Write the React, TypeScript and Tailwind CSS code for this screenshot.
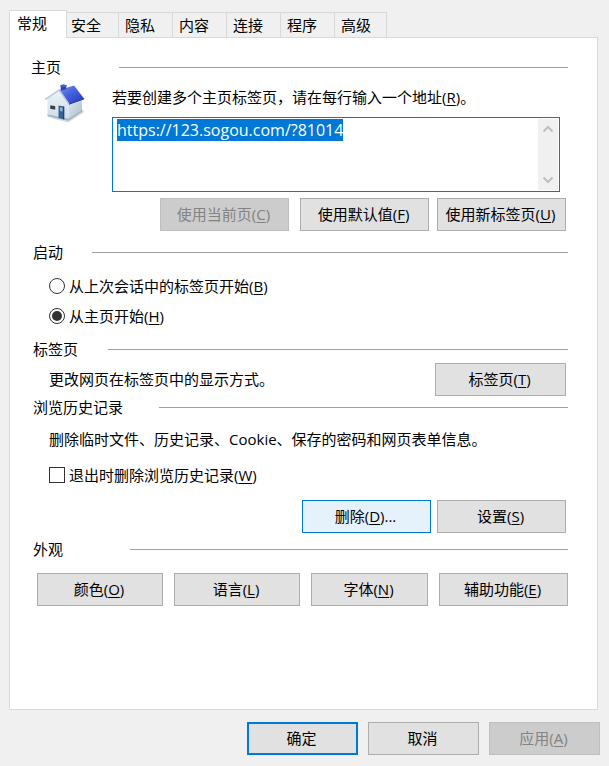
import { useEffect, useRef, type ReactNode } from "react";
import clsx from "clsx";

const tabs = ["常规", "安全", "隐私", "内容", "连接", "程序", "高级"];

// Label text followed by its access key, e.g. 颜色(O)
function Keyed({ text, k, after }: { text: string; k: string; after?: string }) {
  return (
    <span>
      {text}(<span className="underline underline-offset-2">{k}</span>){after}
    </span>
  );
}

type ButtonProps = {
  children: ReactNode;
  variant?: "normal" | "hover" | "default";
  disabled?: boolean;
  className?: string;
};

function Button({ children, variant = "normal", disabled, className }: ButtonProps) {
  return (
    <button
      type="button"
      disabled={disabled}
      className={clsx(
        "flex h-[33px] items-center justify-center pr-[2px] pb-[2px] whitespace-nowrap",
        disabled && "border border-[#bfbfbf] bg-[#cccccc] text-[#838383]",
        !disabled && variant === "normal" && "border border-[#adadad] bg-[#e1e1e1]",
        !disabled && variant === "hover" && "border border-[#0078d7] bg-[#e5f1fb]",
        !disabled && variant === "default" && "border-2 border-[#0078d7] bg-[#e1e1e1]",
        className
      )}
    >
      {children}
    </button>
  );
}

function Heading({ title, className }: { title: string; className: string }) {
  return (
    <div className={clsx("flex items-center", className)}>
      <h2>{title}</h2>
      <div className="h-px flex-1 bg-[#a0a0a0]" />
    </div>
  );
}

function HouseIcon() {
  return (
    <svg width="42" height="42" viewBox="0 0 42 42" aria-hidden="true">
      <defs>
        <linearGradient id="roof" x1="0" y1="0" x2="1" y2="1">
          <stop offset="0" stopColor="#7d94ee" />
          <stop offset="0.45" stopColor="#4460de" />
          <stop offset="1" stopColor="#2535bb" />
        </linearGradient>
        <linearGradient id="front" x1="0" y1="0" x2="0" y2="1">
          <stop offset="0" stopColor="#eef3f8" />
          <stop offset="1" stopColor="#cbdbe7" />
        </linearGradient>
        <linearGradient id="side" x1="0" y1="0" x2="1" y2="1">
          <stop offset="0" stopColor="#dbe6ee" />
          <stop offset="1" stopColor="#a9becd" />
        </linearGradient>
      </defs>
      <path d="M4 35 25 40.5 41.5 30 39 27 25 37Z" fill="#8b989f" opacity="0.35" />
      <path d="M4.5 17 16 8.5 25.5 22V38.5L4.5 34Z" fill="url(#front)" />
      <path d="M25.5 21.5 39 17.5V29.5L25.5 38.5Z" fill="url(#side)" />
      <path d="M4.5 32.5 25.5 36.8 39 28V29.7L25.5 38.7 4.5 34.3Z" fill="#a3b5c2" />
      <path d="M16 8 31 3.5 41.2 16.8 26 22.2Z" fill="url(#roof)" />
      <path d="M17.8 4V8.6L23.2 7V4Z" fill="#2c42a4" />
      <path d="M17.2 3.2 20.5 2.3 23.8 3.2V4.4L20.5 5.2 17.2 4.4Z" fill="#4a63c4" />
      <path d="M2.3 17.5 16 8 26 22.2" fill="none" stroke="#bccbdc" strokeWidth="1.6" />
      <path d="M26 22.2 41.2 16.8" stroke="#2333a0" strokeWidth="1" />
      <path d="M6.5 22.5 13 23.4V28.6L6.5 27.5Z" fill="#f4f8fb" />
      <path d="M7.2 23.2 12.3 24V27.8L7.2 26.9Z" fill="#39424d" />
      <path d="M15.5 23.6 21.2 24.6V37.4L15.5 36.1Z" fill="#386494" />
      <path d="M17 25.2 19.6 25.7V29.4L17 28.9Z" fill="#8db4d4" />
      <path d="M20.7 24.6V37.3" stroke="#193e6c" strokeWidth="1" />
    </svg>
  );
}

function ScrollArrow({ down }: { down?: boolean }) {
  return (
    <button type="button" aria-label={down ? "向下滚动" : "向上滚动"} className="flex h-5 items-center justify-center">
      <svg width="10" height="8" viewBox="0 0 10 8" fill="none" stroke="#bfbfbf" strokeWidth="2">
        <path d={down ? "M.5 1.5 5 6 9.5 1.5" : "M.5 6.5 5 2 9.5 6.5"} />
      </svg>
    </button>
  );
}

export default function App() {
  const address = useRef<HTMLTextAreaElement>(null);

  useEffect(() => {
    address.current?.focus();
    address.current?.select();
  }, []);

  return (
    <main className="flex min-h-screen flex-col bg-[#f0f0f0] px-[9px] pt-[10px] pb-[11px] font-['Open_Sans','Noto_Sans_CJK_SC',sans-serif] text-[15px] leading-5 text-black">
      {/* Tabs */}
      <div role="tablist" className="relative z-10 -mb-px flex items-end">
        {tabs.map((tab, i) => (
          <button
            key={tab}
            type="button"
            role="tab"
            aria-selected={i === 0}
            className={clsx(
              "border-[#d9d9d9] text-left",
              i === 0 && "h-7 w-[58px] border-x border-t bg-white pb-[3px] pl-[7px]",
              i === 1 && "h-[26px] w-[52px] border-y border-r pl-1",
              i > 1 && i < 6 && "h-[26px] w-[54px] border-y border-r pl-[6px]",
              i === 6 && "h-[26px] w-[52px] border-y border-r pl-[6px]"
            )}
          >
            {tab}
          </button>
        ))}
      </div>

      <div role="tabpanel" className="mr-[2px] flex-1 border border-[#d9d9d9] bg-white pt-[19px] pr-[29px] pl-[23px]">
        <section>
          <Heading title="主页" className="-ml-[2px] gap-[58px]" />
          <div className="mt-[5px] flex">
            <div className="w-[79px] shrink-0 pl-[10px]">
              <HouseIcon />
            </div>
            <div className="flex-1 pt-[5px] pr-2">
              <label htmlFor="address">
                <Keyed text="若要创建多个主页标签页，请在每行输入一个地址" k="R" after="。" />
              </label>
              <div className="mt-[10px] flex h-[75px] border border-[#0078d7] p-px">
                <textarea
                  id="address"
                  ref={address}
                  spellCheck={false}
                  defaultValue="https://123.sogou.com/?81014"
                  className="flex-1 resize-none overflow-hidden px-[3px] py-px text-[16px] outline-none selection:bg-[#0078d7] selection:text-white"
                />
                <div className="flex w-5 flex-col justify-between bg-[#f0f0f0]">
                  <ScrollArrow />
                  <ScrollArrow down />
                </div>
              </div>
            </div>
          </div>
          <div className="mt-[6px] flex justify-end gap-2 pr-[2px]">
            <Button disabled className="mr-[3px] w-[129px]">
              <Keyed text="使用当前页" k="C" />
            </Button>
            <Button className="w-[129px]">
              <Keyed text="使用默认值" k="F" />
            </Button>
            <Button className="w-[129px]">
              <Keyed text="使用新标签页" k="U" />
            </Button>
          </div>
        </section>

        <section className="mt-[11px]">
          <Heading title="启动" className="gap-[29px]" />
          <div className="mt-[14px] flex flex-col items-start gap-[10px] pl-4">
            <label className="flex items-center gap-1">
              <input
                type="radio"
                name="startup"
                className="size-4 appearance-none rounded-full border border-[#333333] bg-white p-[2px] bg-clip-content checked:bg-[#333333]"
              />
              <Keyed text="从上次会话中的标签页开始" k="B" />
            </label>
            <label className="flex items-center gap-1">
              <input
                type="radio"
                name="startup"
                defaultChecked
                className="size-4 appearance-none rounded-full border border-[#333333] bg-white p-[2px] bg-clip-content checked:bg-[#333333]"
              />
              <Keyed text="从主页开始" k="H" />
            </label>
          </div>
        </section>

        <section className="mt-[13px]">
          <Heading title="标签页" className="gap-[30px]" />
          <div className="mt-1 flex items-center justify-between pr-[2px] pl-4">
            <p className="pb-[2px]">更改网页在标签页中的显示方式。</p>
            <Button className="w-[131px]">
              <Keyed text="标签页" k="T" />
            </Button>
          </div>
        </section>

        <section className="mt-px">
          <Heading title="浏览历史记录" className="gap-9" />
          <p className="mt-3 pl-4">删除临时文件、历史记录、Cookie、保存的密码和网页表单信息。</p>
          <div className="mt-4 flex pl-4">
            <label className="flex items-center gap-1">
              <input type="checkbox" className="size-4 appearance-none border border-[#333333] bg-white" />
              <Keyed text="退出时删除浏览历史记录" k="W" />
            </label>
          </div>
          <div className="mt-[15px] flex justify-end gap-[6px] pr-[2px]">
            <Button variant="hover" className="w-[129px]">
              <Keyed text="删除" k="D" after="..." />
            </Button>
            <Button className="w-[129px]">
              <Keyed text="设置" k="S" />
            </Button>
          </div>
        </section>

        <section className="mt-[6px]">
          <Heading title="外观" className="gap-[67px]" />
          <div className="mt-[14px] grid grid-cols-[126fr_126fr_117fr_129fr] gap-[11px] pl-1">
            <Button>
              <Keyed text="颜色" k="O" />
            </Button>
            <Button>
              <Keyed text="语言" k="L" />
            </Button>
            <Button>
              <Keyed text="字体" k="N" />
            </Button>
            <Button>
              <Keyed text="辅助功能" k="E" />
            </Button>
          </div>
        </section>
      </div>

      <div className="mt-3 flex justify-end gap-[10px]">
        <Button variant="default" className="w-[111px]">
          确定
        </Button>
        <Button className="w-[111px]">取消</Button>
        <Button disabled className="w-[111px]">
          <Keyed text="应用" k="A" />
        </Button>
      </div>
    </main>
  );
}
